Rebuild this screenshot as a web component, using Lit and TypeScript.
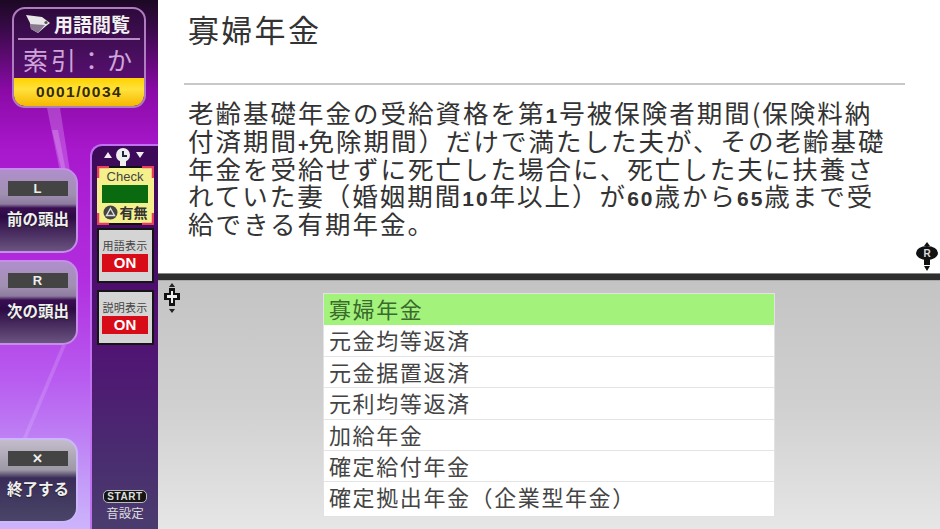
import { LitElement, html, css, svg } from "lit";
import { customElement } from "lit/decorators.js";

const ITEMS = ["寡婦年金","元金均等返済","元金据置返済","元利均等返済","加給年金","確定給付年金","確定拠出年金（企業型年金）"];

const streaks = svg`<svg class="streaks" viewBox="0 0 158 529" preserveAspectRatio="none" aria-hidden="true">
  <path d="M47 108 L60 108 L70 172 L60 172 Z" fill="#e8b0ff" opacity=".3"/>
  <path d="M52 130 L58 130 L66 172 L62 172 Z" fill="#f4d0ff" opacity=".25"/>
  <path d="M62 345 L22 440 L26 440 L66 345 Z" fill="#e8c8ff" opacity=".22"/>
</svg>`;

@customElement("app-root")
export class AppRoot extends LitElement {
  static styles = css`
    :host { display:block; width:940px; height:529px; overflow:hidden; font-family:"Noto Sans CJK JP","Noto Sans",sans-serif; }
    .app { display:flex; width:940px; height:529px; }
    .side { position:relative; flex:none; width:158px; height:529px; display:flex; flex-direction:column;
      background:linear-gradient(180deg,#1c0824 0,#3a0a4a 30px,#8a0aa6 90px,#a818cc 150px,#b22ee0 280px,#b85cf0 380px,#c39af8 480px,#cdb4fc 529px); }
    .streaks { position:absolute; inset:0; width:100%; height:100%; pointer-events:none; }
    .head { position:relative; margin:7px 0 0 12px; width:134px; height:101px; box-sizing:border-box; flex:none;
      border:2px solid #b07cc0; border-radius:13px; background:linear-gradient(180deg,#2e0a3c,#4a0f60 50%,#6a0c84);
      display:flex; flex-direction:column; overflow:hidden; }
    .h-title { display:flex; align-items:center; gap:2px; height:29px; padding:0 0 0 10px; color:#f2f2f2; font-size:19px; font-weight:700; flex:none; white-space:nowrap; }
    .h-title svg { width:28px; height:24px; flex:none; }
    .h-rule { height:2px; margin:0 4px; background:#b98cc6; flex:none; }
    .h-idx { flex:1; display:flex; justify-content:center; align-items:center; color:#cfa4da; font-size:25px; letter-spacing:3px; white-space:pre; }
    .h-count { height:28px; flex:none; border-radius:0 0 10px 10px; display:flex; align-items:center; justify-content:center;
      background:linear-gradient(180deg,#ffd200,#ffe23c 40%,#f6b800); color:#332a00; font:700 15.5px "Liberation Sans",sans-serif; letter-spacing:1.4px; }
    .body { position:relative; flex:1; margin-top:36px; display:flex; justify-content:space-between; min-height:0; }
    .btns { width:78px; display:flex; flex-direction:column; padding-top:24px; }
    .btn { width:78px; height:85px; box-sizing:border-box; flex:none; position:relative; border-radius:0 15px 15px 0; border:2px solid #c48ee8; border-left:0;
      background:linear-gradient(180deg,#b08fcc 0,#a090b0 24px,#8e7ca0 34px,#3a0f52 38px,#2c0a44 58%,#6a5480 100%); display:flex; flex-direction:column; align-items:center; overflow:hidden; }
    .btn + .btn { margin-top:7px; }
    .btn.end { margin-top:auto; margin-bottom:6px; background:linear-gradient(180deg,#c4bccc 0,#9c98a4 30px,#3a2c58 38px,#4a4668 100%); border-color:#cbb8fa; }
    .key { margin:11px 0 0 -1px; width:60px; height:15px; background:#444; color:#eee; font:700 13px/15px "Liberation Sans",sans-serif; text-align:center; flex:none; }
    .lbl { margin-top:12px; color:#f0f0f0; font-size:15.5px; line-height:20px; font-weight:700; white-space:nowrap; text-shadow:0 1px 1px #222; }
    .panel { width:68px; box-sizing:border-box; border:2px solid #c070f0; border-right:0; border-bottom:0; border-radius:12px 0 0 0;
      background:linear-gradient(180deg,#3c0a58 0,#520f74 180px,#4a2a70 300px,#4a3c6e 100%);
      display:flex; flex-direction:column; align-items:center; }
    .pico { width:46px; height:18px; margin-top:2px; flex:none; }
    .check { width:57px; height:59px; box-sizing:border-box; flex:none; background:#f4f08c;
      position:relative; display:flex; flex-direction:column; align-items:center; }
    .check .frame { position:absolute; inset:0; width:100%; height:100%; }
    .check .c { color:#444; font:13px/16px "Liberation Sans",sans-serif; margin-top:3px; height:16px; }
    .check .g { width:46px; height:18px; background:#0a6a10; }
    .check .u { display:flex; align-items:center; gap:2px; font-size:14px; font-weight:700; color:#333; line-height:17px; margin-top:1px; white-space:nowrap; }
    .check .u svg { width:15px; height:15px; }
    .tog { width:57px; height:55px; box-sizing:border-box; margin-top:3px; flex:none; background:#d4d4d4; border:2px solid #151515; display:flex; flex-direction:column; align-items:center; padding-top:8px; }
    .tog + .tog { margin-top:7px; }
    .tog .t { color:#444; font-size:11px; line-height:14px; white-space:nowrap; letter-spacing:.2px; }
    .tog .o { margin-top:2px; width:46px; height:18px; background:#d80c18; color:#fff; font:700 15px/18px "Liberation Sans",sans-serif; text-align:center; }
    .start { margin-top:auto; margin-bottom:8px; display:flex; flex-direction:column; align-items:center; color:#ddd; }
    .start .s { background:#151515; border:1px solid #bbb; border-radius:5px; font:700 10px/11px "Liberation Sans",sans-serif; padding:0 3px; color:#ddd; letter-spacing:.6px; }
    .start .nm { font-size:12.5px; line-height:17px; margin-top:1px; }
    .main { flex:1; display:flex; flex-direction:column; min-width:0; }
    .top { position:relative; height:273px; flex:none; background:#fff; box-sizing:border-box; padding:9px 35px 0 26px; color:#333; }
    .title { font-size:31px; line-height:40px; letter-spacing:2.3px; padding-left:4px; height:76px; box-sizing:border-box; border-bottom:2px solid #c8c8c8; }
    .desc { margin-top:13px; font-size:25.5px; line-height:27.8px; letter-spacing:2px; padding-left:4px; white-space:nowrap; }
    .desc div { height:27.8px; }
    .n { font:700 21px "Liberation Sans",sans-serif; letter-spacing:2px; }
    .n.p { letter-spacing:0; font-size:18px; }
    .ra { position:absolute; right:0; bottom:1px; width:26px; height:30px; }
    .bar { height:8px; flex:none; background:#2e2e2e; border-top:1px solid #888; border-bottom:1px solid #aaa; box-sizing:border-box; }
    .low { position:relative; flex:1; background:linear-gradient(180deg,#c4c4c4,#d0d0d0 50%,#e6e6e6); display:flex; justify-content:center; align-items:flex-start; padding:12px 0 0 0; }
    .cross { position:absolute; left:4px; top:2px; width:20px; height:30px; }
    .list { margin-left:0; width:452px; min-height:224px; box-sizing:border-box; background:#fff; border:1px solid #e2e2e2; }
    .row { height:31.4px; box-sizing:border-box; padding-left:5px; font-size:22px; line-height:29px; letter-spacing:1.6px; color:#444; border-bottom:1px solid #e4e4e4; white-space:nowrap; }
    .row.sel { background:#a2f27c; color:#3a6a2c; border-bottom:0; }
    .row:last-child { border-bottom:0; }
  `;

  render() {
    return html`<div class="app">
      <aside class="side">
        ${streaks}
        <div class="head">
          <div class="h-title">
            <svg viewBox="0 0 28 24"><path d="M2 3 L18 5 L26 11 L22 14 L14 21 L7 17 L6 11 Z" fill="#e8e8e8"/><path d="M6 12 L21 13 L14 21 L7 17 Z" fill="#8a7a90"/><circle cx="22" cy="10.5" r="1.6" fill="#555"/></svg>
            <span>用語閲覧</span>
          </div>
          <div class="h-rule"></div>
          <div class="h-idx">索引：か</div>
          <div class="h-count">0001/0034</div>
        </div>
        <div class="body">
          <div class="btns">
            <div class="btn"><div class="key">L</div><div class="lbl">前の頭出</div></div>
            <div class="btn"><div class="key">R</div><div class="lbl">次の頭出</div></div>
            <div class="btn end"><div class="key">✕</div><div class="lbl">終了する</div></div>
          </div>
          <div class="panel">
            <svg class="pico" viewBox="0 0 46 18"><path d="M0 10 L4 4 L8 10 Z M32 4 L40 4 L36 10 Z" fill="#eee" transform="translate(2 0)"/><circle cx="21" cy="7" r="7" fill="#eee"/><rect x="18" y="12" width="6" height="6" fill="#eee"/><path d="M21 3 V8 H25" stroke="#224" stroke-width="2" fill="none"/></svg>
            <div class="check">
              <svg class="frame" viewBox="0 0 57 59"><path d="M12 1 H45 M12 58 H45" stroke="#111" stroke-width="2"/><path d="M1 12 V1 H12 M45 1 H56 V12 M1 47 V58 H12 M45 58 H56 V47" fill="none" stroke="#e8405c" stroke-width="2.5"/></svg>
              <div class="c">Check</div><div class="g"></div>
              <div class="u"><svg viewBox="0 0 15 15"><circle cx="7.5" cy="7.5" r="7" fill="#444"/><path d="M7.5 3.5 L11.5 10.5 H3.5 Z" fill="none" stroke="#ddd" stroke-width="1.4"/></svg>有無</div>
            </div>
            <div class="tog"><div class="t">用語表示</div><div class="o">ON</div></div>
            <div class="tog"><div class="t">説明表示</div><div class="o">ON</div></div>
            <div class="start"><div class="s">START</div><div class="nm">音設定</div></div>
          </div>
        </div>
      </aside>
      <main class="main">
        <section class="top">
          <div class="title">寡婦年金</div>
          <div class="desc">
            <div>老齢基礎年金の受給資格を第<span class="n">1</span>号被保険者期間(保険料納</div>
            <div>付済期間<span class="n p">+</span>免除期間）だけで満たした夫が、その老齢基礎</div>
            <div>年金を受給せずに死亡した場合に、死亡した夫に扶養さ</div>
            <div>れていた妻（婚姻期間<span class="n">10</span>年以上）が<span class="n">60</span>歳から<span class="n">65</span>歳まで受</div>
            <div>給できる有期年金。</div>
          </div>
          <svg class="ra" viewBox="0 0 26 30"><path d="M13 0 L16 4 H10 Z M10 24 H16 L13 29 Z" fill="#111"/><ellipse cx="13" cy="11" rx="11" ry="7" fill="#111"/><rect x="10" y="16" width="6" height="7" fill="#111"/><text x="13" y="15" font-size="10" font-weight="700" font-family="Liberation Sans" text-anchor="middle" fill="#ddd">R</text></svg>
        </section>
        <div class="bar"></div>
        <section class="low">
          <svg class="cross" viewBox="0 0 20 30"><path d="M10 0 L13 4 H7 Z M7 26 H13 L10 30 Z" fill="#222"/><path d="M7 5 H13 V10 H18 V17 H13 V23 H7 V17 H2 V10 H7 Z" fill="#111"/><path d="M9 8 H11 V12 H15 V15 H11 V20 H9 V15 H5 V12 H9 Z" fill="#eee"/></svg>
          <div class="list">
            ${ITEMS.map((t,i)=>html`<div class="row ${i===0?"sel":""}">${t}</div>`)}
          </div>
        </section>
      </main>
    </div>`;
  }
}
